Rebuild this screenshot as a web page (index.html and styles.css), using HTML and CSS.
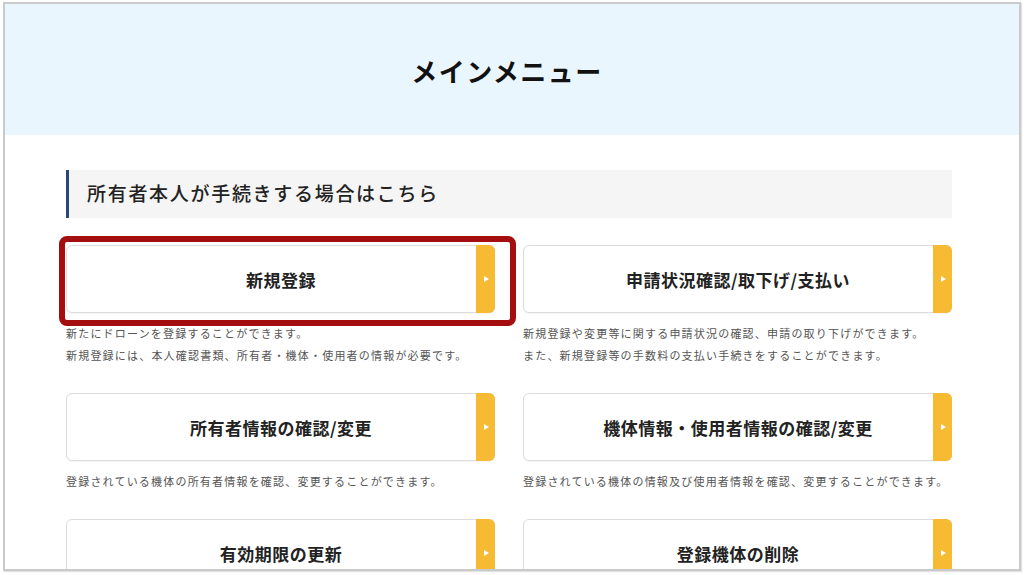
FILE: index.html
```html
<!DOCTYPE html>
<html lang="ja">

<head>
    <meta charset="UTF-8">
    <meta name="viewport" content="width=device-width, initial-scale=1.0">
    <title>メインメニュー</title>
    <link rel="stylesheet" href="styles.css">
</head>

<body>
    <div class="frame">
        <div class="page-header">
            <h1>メインメニュー</h1>
        </div>

        <div class="content">
            <h2 class="section-title">所有者本人が手続きする場合はこちら</h2>

            <div class="menu-grid">
                <div class="menu-item">
                    <a class="menu-card highlighted" href="#">
                        <span class="menu-label">新規登録</span>
                        <span class="menu-arrow"></span>
                    </a>
                    <p class="menu-desc">新たにドローンを登録することができます。<br>新規登録には、本人確認書類、所有者・機体・使用者の情報が必要です。</p>
                </div>

                <div class="menu-item">
                    <a class="menu-card" href="#">
                        <span class="menu-label">申請状況確認/取下げ/支払い</span>
                        <span class="menu-arrow"></span>
                    </a>
                    <p class="menu-desc">新規登録や変更等に関する申請状況の確認、申請の取り下げができます。<br>また、新規登録等の手数料の支払い手続きをすることができます。</p>
                </div>

                <div class="menu-item">
                    <a class="menu-card" href="#">
                        <span class="menu-label">所有者情報の確認/変更</span>
                        <span class="menu-arrow"></span>
                    </a>
                    <p class="menu-desc">登録されている機体の所有者情報を確認、変更することができます。</p>
                </div>

                <div class="menu-item">
                    <a class="menu-card" href="#">
                        <span class="menu-label">機体情報・使用者情報の確認/変更</span>
                        <span class="menu-arrow"></span>
                    </a>
                    <p class="menu-desc">登録されている機体の情報及び使用者情報を確認、変更することができます。</p>
                </div>

                <div class="menu-item">
                    <a class="menu-card" href="#">
                        <span class="menu-label">有効期限の更新</span>
                        <span class="menu-arrow"></span>
                    </a>
                </div>

                <div class="menu-item">
                    <a class="menu-card" href="#">
                        <span class="menu-label">登録機体の削除</span>
                        <span class="menu-arrow"></span>
                    </a>
                </div>
            </div>
        </div>
    </div>
</body>

</html>
```

FILE: styles.css
```css
html,
body {
    margin: 0;
    padding: 0;
    background: #fff;
    height: 100%;
    overflow: hidden;
}

body {
    padding: 2px 3px 0 3px;
    box-sizing: border-box;
    font-family: "Noto Sans CJK JP", "Noto Sans", sans-serif;
    color: #222;
}

.frame {
    height: 569px;
    border: 2px solid #cacaca;
    box-shadow: 1px 1px 1px #e2e2e2;
    overflow: hidden;
    box-sizing: border-box;
}

.page-header {
    background: #e9f6fe;
    height: 131px;
    display: flex;
    justify-content: center;
    align-items: center;
    padding: 2px 10px 0 0;
    box-sizing: border-box;
}

.page-header h1 {
    margin: 0;
    font-size: 26px;
    font-weight: bold;
    letter-spacing: 1.5px;
    color: #111;
}

.content {
    padding: 35px 67px 0 61px;
}

.section-title {
    margin: 0;
    height: 48px;
    display: flex;
    align-items: center;
    padding-left: 18px;
    padding-bottom: 3px;
    box-sizing: border-box;
    background: #f5f5f5;
    border-left: 3px solid #2b4677;
    font-size: 19px;
    font-weight: 500;
    letter-spacing: 1.7px;
    color: #222;
}

.menu-grid {
    display: grid;
    grid-template-columns: 429px 429px;
    column-gap: 28px;
    row-gap: 27px;
    margin-top: 27px;
    align-items: start;
}

.menu-card {
    position: relative;
    display: flex;
    height: 68px;
    border: 1px solid #dcdcdc;
    border-radius: 6px;
    box-sizing: border-box;
    text-decoration: none;
    color: #222;
    background: #fff;
    box-shadow: 0 1px 1px rgba(0, 0, 0, 0.04);
}

.menu-card.highlighted::after {
    content: "";
    position: absolute;
    left: -8px;
    right: -22px;
    top: -10px;
    bottom: -14px;
    border: 6px solid #a50e0e;
    border-radius: 8px;
}

.menu-label {
    flex: 1;
    display: flex;
    justify-content: center;
    align-items: center;
    padding-left: 19px;
    font-size: 17px;
    font-weight: bold;
    letter-spacing: 0.5px;
}

.menu-arrow {
    width: 19px;
    margin: -1px -1px -1px 0;
    background: #f6ba33;
    border-radius: 0 6px 6px 0;
    display: flex;
    justify-content: center;
    align-items: center;
}

.menu-arrow::before {
    content: "";
    border-left: 5px solid #fff;
    border-top: 3.5px solid transparent;
    border-bottom: 3.5px solid transparent;
    margin-left: 2px;
}

.menu-desc {
    margin: 9px 0 0;
    font-size: 11px;
    line-height: 22px;
    letter-spacing: 1.2px;
    color: #555;
}
```
